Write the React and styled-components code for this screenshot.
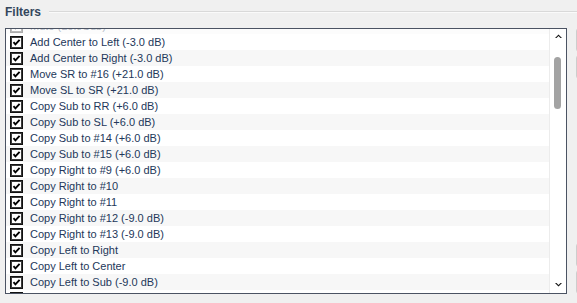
import React, {useLayoutEffect, useRef} from 'react';
import styled, {createGlobalStyle} from 'styled-components';

const GlobalStyle = createGlobalStyle`
    html, body {
        margin: 0;
        padding: 0;
        background: #f0f0f0;
        overflow: hidden;
    }
`;

const filters = [
    {label: 'Mute (Left/Sub)'},
    {label: 'Add Center to Left (-3.0 dB)'},
    {label: 'Add Center to Right (-3.0 dB)'},
    {label: 'Move SR to #16 (+21.0 dB)'},
    {label: 'Move SL to SR (+21.0 dB)'},
    {label: 'Copy Sub to RR (+6.0 dB)'},
    {label: 'Copy Sub to SL (+6.0 dB)'},
    {label: 'Copy Sub to #14 (+6.0 dB)'},
    {label: 'Copy Sub to #15 (+6.0 dB)'},
    {label: 'Copy Right to #9 (+6.0 dB)'},
    {label: 'Copy Right to #10'},
    {label: 'Copy Right to #11'},
    {label: 'Copy Right to #12 (-9.0 dB)'},
    {label: 'Copy Right to #13 (-9.0 dB)'},
    {label: 'Copy Left to Right'},
    {label: 'Copy Left to Center'},
    {label: 'Copy Left to Sub (-9.0 dB)'},
    {label: 'Copy Left to #7'}
];

const Page = styled.div`
    width: 577px;
    height: 303px;
    padding-left: 5px;
    box-sizing: border-box;
    overflow: hidden;
    font-family: "Liberation Sans", Arial, sans-serif;
`;

const Header = styled.div`
    display: flex;
    align-items: center;
    gap: 8px;
    height: 24px;
    margin-bottom: 4px;
`;

const Title = styled.h2`
    margin: 0;
    font-size: 12px;
    font-weight: bold;
    color: #34465c;
`;

const Rule = styled.div`
    flex: 1;
    height: 1px;
    background: #d9d9d9;
    border-bottom: 1px solid #fafafa;
`;

const Body = styled.div`
    display: flex;
    gap: 9px;
`;

const ListBox = styled.div`
    position: relative;
    flex-shrink: 0;
    display: flex;
    width: 562px;
    height: 266px;
    box-sizing: border-box;
    border: 1px solid #4b5363;
    background: #ffffff;
`;

const Viewport = styled.ul`
    flex: 1;
    margin: 0;
    padding: 0;
    list-style: none;
    overflow: hidden;
`;

const Fade = styled.div`
    position: absolute;
    left: 0;
    right: 17px;
    top: 0;
    height: 6px;
    background: rgba(255, 255, 255, 0.65);
    pointer-events: none;
`;

const Row = styled.li`
    display: flex;
    align-items: center;
    gap: 7px;
    height: 16px;
    padding-left: 4px;
    background: ${({$odd}) => ($odd ? '#f7f7f7' : '#ffffff')};
`;

const Label = styled.span`
    font-size: 11px;
    color: #23375a;
    white-space: nowrap;
`;

const ScrollBar = styled.div`
    position: relative;
    flex-shrink: 0;
    width: 16px;
    border-left: 1px solid #ececec;
    background: #ffffff;
`;

const Arrow = styled.svg`
    position: absolute;
    left: 5px;
    ${({$down}) => ($down ? 'bottom: 6px;' : 'top: 5px;')}
`;

const Thumb = styled.div`
    position: absolute;
    left: 4px;
    top: 28px;
    width: 7px;
    height: 52px;
    border-radius: 4px;
    background: #a3a3a3;
`;

const Side = styled.div`
    flex-shrink: 0;
    display: flex;
    flex-direction: column;
    justify-content: space-between;
    height: 266px;
`;

const SideGroup = styled.div`
    display: flex;
    flex-direction: column;
    gap: 3px;
`;

const SideButton = styled.div`
    width: 70px;
    height: 22px;
    border: 1px solid #cdcdcd;
    border-radius: 3px;
    background: #f4f4f4;
`;

const CheckBox = () => (
    <svg width="13" height="13" viewBox="0 0 13 13">
        <rect x="0.5" y="0.5" width="12" height="12" fill="#ffffff" stroke="#111111" />
        <rect x="1.5" y="1.5" width="10" height="10" fill="none" stroke="#3a3a3a" />
        <path d="M3.5 6.2 L5.4 8.3 L9.6 3.9" fill="none" stroke="#000000" strokeWidth="1.9" />
    </svg>
);

export default function App() {
    const viewport = useRef(null);

    useLayoutEffect(() => {
        // first row only shows its bottom few pixels
        viewport.current.scrollTop = 11;
    }, []);

    return (
        <Page>
            <GlobalStyle />
            <Header>
                <Title>Filters</Title>
                <Rule />
            </Header>
            <Body>
                <ListBox>
                    <Viewport ref={viewport}>
                        {filters.map(({label}, i) => (
                            <Row key={label} $odd={i % 2 === 0}>
                                <CheckBox />
                                <Label>{label}</Label>
                            </Row>
                        ))}
                    </Viewport>
                    <Fade />
                    <ScrollBar>
                        <Arrow width="7" height="4" viewBox="0 0 7 4">
                            <path d="M0 4 L3.5 0.5 L7 4 L5.5 4 L3.5 2 L1.5 4 Z" fill="#111" />
                        </Arrow>
                        <Thumb />
                        <Arrow $down width="7" height="4" viewBox="0 0 7 4">
                            <path d="M0 0 L3.5 3.5 L7 0 L5.5 0 L3.5 2 L1.5 0 Z" fill="#111" />
                        </Arrow>
                    </ScrollBar>
                </ListBox>
                <Side>
                    <SideGroup>
                        <SideButton />
                        <SideButton />
                    </SideGroup>
                    <SideGroup>
                        <SideButton />
                        <SideButton />
                    </SideGroup>
                </Side>
            </Body>
        </Page>
    );
}
